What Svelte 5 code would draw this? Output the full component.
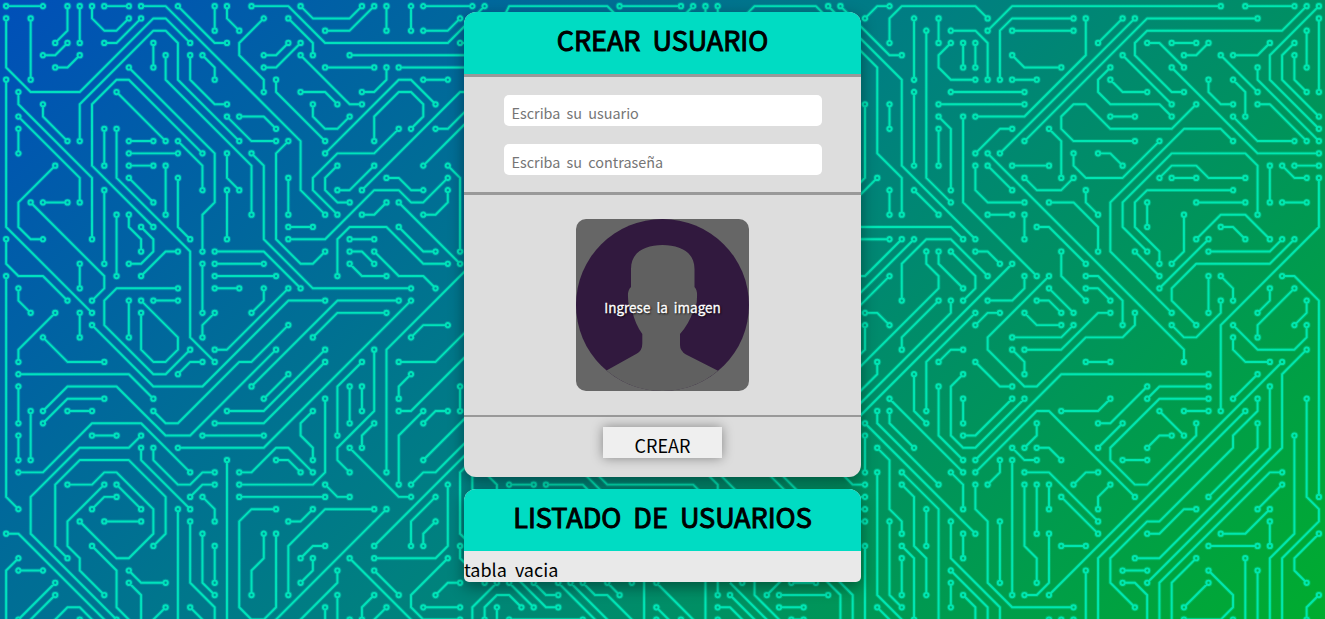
<script>
  const pitch = 12.269;
  const at = (n) => 6.13 + n * pitch;

  // Each trace is a list of grid points; "*" marks an end that runs on without a ring.
  const traces = `
0,0 3,0|5,0 5,2 4,3|6,0 6,3|7,0 7,1 8,2 9,2 10,1|8,0 10,0|11,0 13,0 24,11 24,15 26,17|14,0 17,3 18,3|17,0 17,2|18,0 18,1 19,2
0,1 0,5 2,7 6,7 12,1 13,1 15,3|2,1 2,6|11,1 9,3 8,3|5,3 4,4 3,4|6,4 5,5 4,5|12,3 12,5|6,11 6,8 12,2 13,2 14,3 14,6 19,11|13,4 13,6 20,13 20,17
15,4 15,6 17,8 18,8|16,4 17,5 17,6|10,5 17,12 17,16 16,17 16,20|0,6 0,18 7,25|1,7 1,8 7,14 7,19|3,8 3,9 5,11|1,9 6,14 6,16|1,10 1,12|9,7 13,11
16,12 10,6 9,6 7,8 7,13 12,18|8,10 8,13|9,10 9,14 15,20 15,27 17,29|10,11 12,11|10,12 14,12|10,13 12,13|14,11 16,13 16,15|10,14 12,16|13,13 13,17|14,14 14,18 15,19|18,12 18,14 19,15|18,15 18,19|18,9 20,11 22,11
4,13 1,16 1,18 2,19 3,19|3,16 5,16|2,16 8,22 8,23 7,24|8,15 8,21|9,17 9,22|10,17 10,18 11,19 11,20|11,18 12,19 12,20 11,21 10,21|14,20 13,20 11,22|6,21 6,23|0,19 0,21 1,22 3,22 5,24|0,22 0,40 1,41|1,23 1,24 2,25
14,23 9,23 8,24 8,26 12,30 13,30 15,28|10,24 10,27|11,24 14,27 14,28 13,29 12,29 11,28 11,25|12,24 14,24|16,21 16,25|16,27 16,26 17,25|17,20 21,20 24,23|17,21 21,21|17,22 22,22|17,23 19,23
20,0 23,0 26,3 36,3 39,0|24,0 25,1 28,1 29,0|30,0 28,2 26,2|31,0 31,2|33,0 33,2|34,0 38,0|37,1 36,2 34,2|37,3 39,3|21,1 19,3 19,4 21,6 21,7|23,1 25,3 25,4|23,3 22,4 21,4|24,3 22,5 21,5|24,4 28,8 29,8|28,4 39,4|26,5 30,5|31,5 31,6 30,7 29,7|32,5 39,5|34,6 36,6
22,6 22,7 26,11|24,7 26,7 27,8|25,8 25,9 26,10 27,10 28,9|26,12 32,6 33,6 35,8|30,11 30,9 32,7 33,7 34,8 34,9 33,10|19,9 21,9 22,10|32,10 30,12 27,12 25,14 25,15 27,17|35,10 36,10 39,7|29,15 37,7 39,7|34,13 39,8|23,11 22,12 22,19 24,21 25,21 26,20|20,12 21,13 21,19 25,23 33,23
27,13 26,14 26,15 27,16 28,16|30,13 28,15 27,15|23,14 23,17|36,13 37,14 37,20|31,14 32,14 33,15 34,15|36,14 34,16 33,16 32,15 30,15 26,19 23,19|23,18 25,18|31,16 30,17 29,17|32,16 37,21|36,15 36,16 35,17 34,17|27,22 27,19 28,18 31,18 34,21 36,21|28,19 30,19|32,18 34,20 35,20|28,20 29,20 30,21|30,20 32,22 34,22 35,23|28,21 29,22 31,22
21,23 21,24 20,25|23,23 18,28 17,28|26,24 23,24 16,31 12,31 7,26|32,24 27,24 20,31|12,33 13,34 14,34 19,29 20,29 23,26|22,28 15,35 13,35 9,31 5,31 3,33|33,24 21,36 14,36|39,20 31,28 31,38
4,25 1,28 1,29|6,25 6,27|3,27 5,29 8,29|1,30 10,30 12,32|1,31 1,34|8,32 5,32 3,34|5,33 7,33|2,33 2,37|1,35 1,37|7,35 9,35|11,35 10,36 6,36 2,40 2,43 9,50|1,38 3,38 7,34 11,34 15,38|11,36 11,37 15,41|12,36 12,37 14,39 15,39 16,38 17,38|17,39 16,39 15,40|16,40 17,41 17,42|18,37 18,51*
14,30 15,29 16,29|18,33 21,33 26,28|17,34 21,34 26,29|16,35 21,35|5,39 7,39 8,38 9,38 12,41 12,43 10,45 9,45 6,42|12,44 13,43 13,40 10,37 6,37 4,39 4,44 5,45|8,39 5,42 5,44 6,45 6,46 8,48|9,39 11,41|9,40 8,40 7,41|8,42 11,42|7,44 9,46 9,49 11,51*|0,43 1,43 9,51*|1,45 0,46 0,51*|1,46 3,46|4,47 1,50|4,48 1,51*
3,51* 5,49 6,49 8,51*|6,50 6,51*|14,41 14,51*|15,42 15,47 17,49 17,51*|16,43 16,47 17,48|17,44 17,47|10,46 11,47 13,47|10,47 11,48 11,51*|13,49 11,51*|15,49 17,51*
31,25 27,25 25,27|36,26 34,26 33,27|30,28 30,33 27,36 27,37 28,38|29,29 27,31 27,35|28,31 28,34|29,31 29,33|32,29 35,29 39,25|33,30 32,31 32,32|37,31 37,33|32,33 33,33 39,27|23,30 21,32|26,32 26,38 25,39 19,39|25,33 24,34 24,35 25,36 25,37|34,33 32,35 32,39|36,33 35,33 34,34|30,34 29,35 29,36
28,36 32,40 33,40|19,38 20,38 22,36 23,36 25,38|22,37 23,37 24,38|19,40 26,40|26,39 27,40 28,40|34,37 39,32|33,39 34,38 35,38 39,34|30,44 39,35|39,36 37,38 37,43 38,44|37,44 37,45 38,46|22,41 20,41 19,42 19,49 20,50* 21,50 22,49 22,43|21,43 21,45 20,46 20,48|25,41 24,42 23,42|30,41 26,41 23,44 23,48|31,41 21,51*
26,44 25,44 24,45|25,45 25,46 24,47|28,45 34,51*|27,46 27,47 23,51*|27,48 27,51*|26,49 26,51*|30,48 29,49 29,50|31,49 29,51*|28,50 28,51*|30,46 32,48|30,45 35,45 36,44 36,39|35,40 33,42 33,44|35,42 34,43 34,44|36,45 33,48 33,49 34,50 37,50|37,47 36,47 35,48|34,49 37,49
42,2* 40,2 41,0* 49,0* 51,2*|50,0 55,0|56,0 54,2|57,0 57,2|58,0 58,2|59,2* 61,0* 66,0* 71,5* 71,12* 73,14* 73,17|67,0 73,6 73,13 79,19|68,0 72,4 73,4
38,38* 38,40*|39,38* 40,39* 40,40*|41,39 43,39|44,39 47,39 48,40|47,38 49,40|48,38 49,39 56,39 57,40|57,38 58,39 58,40|58,38 60,40|62,38 64,40|63,38 65,40|67,37 69,39 70,39|69,40 70,40|69,41 70,41|69,42 70,42
40,47 38,49 38,51*|39,46 39,47|39,50 39,49 40,48 41,48 42,49|40,49 40,51*|41,47 43,49|41,46 44,49 45,49|43,47 44,48 45,48|45,47 49,51*|46,47 50,51*|47,47 48,48 49,48 52,51*|49,47 50,48|51,46 51,47|52,46 52,51*|53,47 57,51*|57,46 57,51*|58,46 58,48|60,46 60,47|53,49 55,51*|55,50 55,51*|53,50 53,51*|41,50 47,50|58,49 59,49 61,51*|58,50 58,51*|59,48 62,51*|59,47* 63,51*|61,46 61,48 64,51*|64,46 62,48|63,48 67,48|64,47 66,47|63,49 65,49|64,50 65,50|66,46 68,48 68,51*|67,46 69,48 69,51*
72,0 71,0 70,1|72,3 72,1 73,0 79,0 80,1|74,1 74,6|76,1 76,3|75,2 75,14 77,16|77,2 79,2 80,3 80,6|77,3 76,4 76,5 77,6 79,6|78,3 78,5|79,3 79,5|80,2 82,0 99,0|81,6 81,2 82,1 87,1|82,2 87,2|88,1 88,4 83,9 79,9|82,4 83,5 86,5|82,6 84,6|77,7 83,7|76,8 83,8|74,7 74,13|70,8 70,14 69,15|71,14 69,16|72,8 72,10|76,9 77,10 77,15|76,10 76,13|78,9 78,16 84,22|82,10 81,10 79,12|81,12 92,1|83,11 93,1 102,1|80,12 96,28 96,29|82,13 85,13|80,13 82,15|79,13 79,15 80,16 83,16|83,14 84,15 86,15 87,14|85,10 86,11 86,14|87,12 87,13 88,14 91,14 94,11
92,11 87,11 86,10 86,9 87,8 88,8 90,10 95,10 97,8|88,15 88,16 89,17|72,15 72,17|74,15 76,17|80,17 82,17|83,17 83,19|85,16 87,16 89,18 89,20|84,18 85,18 88,21|69,18 77,18 78,19|69,19 72,19|73,19 70,22 69,22|74,19 69,24|72,22 69,25|73,24 73,21 75,19 77,19 80,22|75,20 75,21 76,22 76,23 69,30|76,24 73,27 73,28|77,24 77,25 69,33|79,25 75,29 75,33|82,21 69,34|76,20 76,21 78,23|77,20 79,22 79,23 78,24|79,20 80,20 81,21|80,24 82,24 83,23 83,22
85,22 80,27 80,28 83,31 84,31 88,27 91,27 92,26 92,25|85,23 87,25|84,24 85,24 86,25|86,20 86,22 88,24|88,22 89,22 91,24 91,26|88,23 89,23 90,24
101,0 105,0|106,0 104,2 93,2 92,3 92,4 95,7 96,7|107,0 103,4 103,6 107,10|107,1 107,7|106,2 106,5|91,1 89,3|93,3 94,3 96,5|95,3 97,3|98,3 97,4 96,4|103,3 102,4 100,4|105,3 104,4 104,6 107,9|105,4 105,6 106,7|99,4 102,7|91,4 95,8|95,5 102,12 107,12|90,5 89,6 89,7 90,8 94,8 95,9|90,6 91,7 93,7|98,6 98,7 99,8 100,8|100,6 101,7 101,9|102,5 102,6 107,11|102,8 103,8 106,11|100,9 102,11 105,11|90,9 92,9|89,12 90,12 91,13
100,11 99,10 96,10 90,16 90,20 95,25|102,17 102,13 101,12 95,12 91,16 91,18 93,20|94,14 95,13 97,13 98,14 101,14|95,14 97,14|100,15 93,15 92,16 92,18 94,20 94,21|93,16 93,18|97,16 101,16|103,13 103,16|104,13 105,14 106,14|105,13 107,13|104,16 106,16|107,14 107,18 99,26 99,33|96,17 96,20 95,21|97,19 99,17 101,17 103,19|99,18 100,18 101,19|98,19 94,23|98,20 103,20 104,19|105,19 103,21 97,21 95,23 95,24 97,26|92,20 94,22|98,22 98,25|99,22 100,23 100,24|99,24 99,25 97,27 96,27 95,26|104,22 105,22 107,24 107,40|103,23 103,24 102,25|105,23 102,26 102,27|106,24 106,25 105,26
70,25 71,25 72,26|70,26 70,28 69,29|71,29 71,30 69,32|81,25 80,25 79,26|83,25 84,26 86,26|82,27 86,27 87,26|83,28 86,28 89,25 90,25|82,28 83,29 83,30|78,28 77,28 76,29|79,29 81,31 82,31|74,30 74,33 75,34|78,30 77,31 77,35 78,36 79,36 83,32|76,31 76,35 78,37|78,32 78,34|78,35 79,35 82,32|72,32 78,38|71,33 71,34 76,39|72,33 72,34 74,36|70,34 79,43|70,35 70,38|71,36 72,37 72,41 73,42 73,43|79,37 86,30 98,30|79,38 84,33 85,33 92,40|86,33 89,33 90,32|88,29 90,29|84,34 84,35 83,36|82,36 83,37 84,37|84,36 85,36 86,37|81,37 81,38 80,39|82,37 82,48|83,38 85,38 89,42|86,40 89,43|87,39 88,38 89,38
83,39 83,44 84,45 84,47|84,39 84,43|85,39 85,41|85,43 85,47 84,48 83,48|86,44 88,44|85,48 104,29|88,46 88,51*|79,39 79,41 80,42 80,47 82,49 87,49|77,38 78,39 78,41|71,38 71,48 74,51*|73,38 76,41 76,51*|73,39 74,40 74,44 75,45 75,48|75,41 75,44|72,42 72,48 73,49|77,42 77,45 81,49 81,51*|78,43 78,45|81,42 81,47|73,44 74,45 74,50|73,45 73,48|70,44 70,51*|77,46 80,49 80,51*|77,47 77,49|78,48 79,49 79,51*|71,49 73,51*|85,50 85,51*|86,50 86,51*|87,50 87,51*
100,26 102,28 105,28 106,27 106,26|100,27 100,28 101,29 103,29|106,28 104,30 104,36 93,47|103,31 103,36 94,45 92,45|102,30 100,32|101,33 89,45 89,51*|102,32 102,33 100,35 100,36 94,42 93,42 90,45 90,47 92,49|102,34 102,36 98,40|98,31 94,31 93,32|98,32 94,32 90,36 90,37 92,39 93,39 97,35 97,34|96,33 98,33|93,31 90,34 89,34|91,34 89,36|94,33 96,35|95,35 94,35 93,36|91,37 93,37|90,39 89,40 89,41|97,41 96,41 94,43 93,43
104,38 103,38 94,47* 94,51*|104,39 102,41|103,41 101,43 99,43|103,42 103,44|98,44 102,44|105,35 105,43 103,45 103,51*|106,32 106,40 107,41 107,42 104,45 104,51*|107,43 105,45 105,46 106,47|101,45 101,51*|102,46 102,51*|97,45 95,47 95,51*|98,46 100,48 100,49 99,50 96,50|98,47 96,49|91,46 93,46|91,47 92,47 93,48 93,51*|107,48 106,49 106,50|100,50 100,51*`
    .trim()
    .split(/[|\n]/)
    .map((t) =>
      t.split(' ').map((p) => {
        const [x, y] = p.replace('*', '').split(',').map(Number);
        return { x: at(x), y: at(y), open: p.endsWith('*') };
      })
    );

  const ring = 2.15;

  function trim(p, q) {
    if (p.open) return p;
    const d = Math.hypot(q.x - p.x, q.y - p.y);
    return { x: p.x + ((q.x - p.x) * ring) / d, y: p.y + ((q.y - p.y) * ring) / d };
  }

  const paths = traces
    .map((t) => {
      const n = t.length;
      const pts = [trim(t[0], t[1]), ...t.slice(1, -1), trim(t[n - 1], t[n - 2])];
      return 'M' + pts.map((p) => `${p.x.toFixed(2)} ${p.y.toFixed(2)}`).join('L');
    })
    .join('');

  const rings = traces
    .flatMap((t) => [t[0], t[t.length - 1]])
    .filter((p) => !p.open)
    .map((p) => `M${(p.x - ring).toFixed(2)} ${p.y.toFixed(2)}a${ring} ${ring} 0 1 0 ${2 * ring} 0a${ring} ${ring} 0 1 0 ${-2 * ring} 0`)
    .join('');

  const d = paths + rings;
</script>

<div class="page">
  <svg class="board" viewBox="0 0 1325 619" aria-hidden="true">
    <defs>
      <linearGradient id="glow" gradientUnits="userSpaceOnUse" x1="0" y1="0" x2="1325" y2="619">
        <stop offset="0" stop-color="#00e0c2" />
        <stop offset="1" stop-color="#00e8ac" />
      </linearGradient>
    </defs>
    <path {d} class="halo" />
    <path {d} class="core" />
  </svg>

  <main>
    <form class="card" onsubmit={(e) => e.preventDefault()}>
      <h1>CREAR USUARIO</h1>
      <div class="fields">
        <input type="text" placeholder="Escriba su usuario" />
        <input type="password" placeholder="Escriba su contraseña" />
      </div>
      <div class="photo">
        <div class="avatar">
          <svg viewBox="0 0 173 172" preserveAspectRatio="none" aria-hidden="true">
            <ellipse cx="86.5" cy="86" rx="86.5" ry="86" fill="#31193e" />
            <path
              fill="#606060"
              d="M30.500 151.500L61 134.500Q66.300 131.500 66.300 124.500V115Q59 105 56 91Q52 88 52 78Q51.500 71 55 68V50C55 33 69 26 86.500 26S118.500 33 118.500 50V68Q121.500 71 121 78Q121 88 117.500 91Q113 105 104 115V126Q104 132 110 135.500L142 151.800Q118 172 86.500 172T30.500 151.500Z"
            />
          </svg>
          <span>Ingrese la imagen</span>
        </div>
      </div>
      <div class="actions">
        <button>CREAR</button>
      </div>
    </form>

    <section class="card list">
      <h1>LISTADO DE USUARIOS</h1>
      <p>tabla vacia</p>
    </section>
  </main>
</div>

<style>
  :global(body) {
    margin: 0;
  }

  .page {
    position: relative;
    box-sizing: border-box;
    height: 619px;
    padding-top: 12px;
    overflow: hidden;
    background: linear-gradient(135deg, #004fb9 0%, #008080 50%, #00ac2e 100%);
    font-family: 'Noto Sans CJK JP', 'Noto Sans CJK SC', sans-serif;
    color: #000;
  }

  .board {
    position: absolute;
    inset: 0;
    width: 1325px;
    height: 619px;
  }

  .board path {
    fill: none;
    stroke: url(#glow);
    stroke-linejoin: round;
  }

  .board .halo {
    stroke-width: 3.8;
    opacity: 0.28;
  }

  .board .core {
    stroke-width: 1.95;
  }

  main {
    position: relative;
    display: flex;
    flex-direction: column;
    gap: 12px;
    width: 397px;
    margin: 0 auto;
  }

  .card {
    display: flex;
    flex-direction: column;
    border-radius: 12px;
    background: #ddd;
    box-shadow: 0 5px 15px rgba(0, 0, 0, 0.4);
    overflow: hidden;
  }

  h1 {
    height: 62px;
    margin: 0;
    background: #00dcc3;
    font-size: 27px;
    font-weight: 400;
    line-height: 56px;
    word-spacing: 6px;
    text-align: center;
    -webkit-text-stroke: 1px #000;
  }

  .fields {
    display: flex;
    flex-direction: column;
    align-items: center;
    gap: 18px;
    padding: 18px 0 17px;
    border-top: 3px solid #999;
    border-bottom: 3px solid #999;
  }

  input {
    box-sizing: border-box;
    width: 318px;
    height: 31px;
    padding: 3px 8px 0;
    border: 0;
    border-radius: 5px;
    background: #fff;
    font: 14.4px 'Noto Sans CJK JP', sans-serif;
    word-spacing: 3px;
  }

  input::placeholder {
    color: #757575;
  }

  .photo {
    display: flex;
    justify-content: center;
    padding: 24px 0;
    border-bottom: 2px solid #999;
  }

  .avatar {
    display: grid;
    width: 173px;
    height: 172px;
    border-radius: 10px;
    background: #666;
    overflow: hidden;
  }

  .avatar > * {
    grid-area: 1 / 1;
  }

  .avatar svg {
    width: 173px;
    height: 172px;
  }

  .avatar span {
    align-self: center;
    padding-top: 4px;
    color: #fff;
    font-size: 13.5px;
    line-height: 22px;
    word-spacing: 3px;
    text-align: center;
    text-shadow: 1px 1px 2px #000;
    -webkit-text-stroke: 0.3px #fff;
  }

  .actions {
    display: flex;
    justify-content: center;
    padding: 10px 0 19px;
  }

  button {
    width: 119px;
    height: 31px;
    padding: 5px 0 0;
    border: 0;
    background: #efefef;
    color: #000;
    font: 18px/24px 'Noto Sans CJK JP', sans-serif;
    box-shadow: 0 0 12px rgba(0, 0, 0, 0.4);
  }

  .list {
    border-radius: 12px 12px 5px 5px;
    background: #e9e9e9;
  }

  p {
    height: 31px;
    margin: 0;
    font-size: 18px;
    line-height: 37px;
    word-spacing: 4px;
  }
</style>
